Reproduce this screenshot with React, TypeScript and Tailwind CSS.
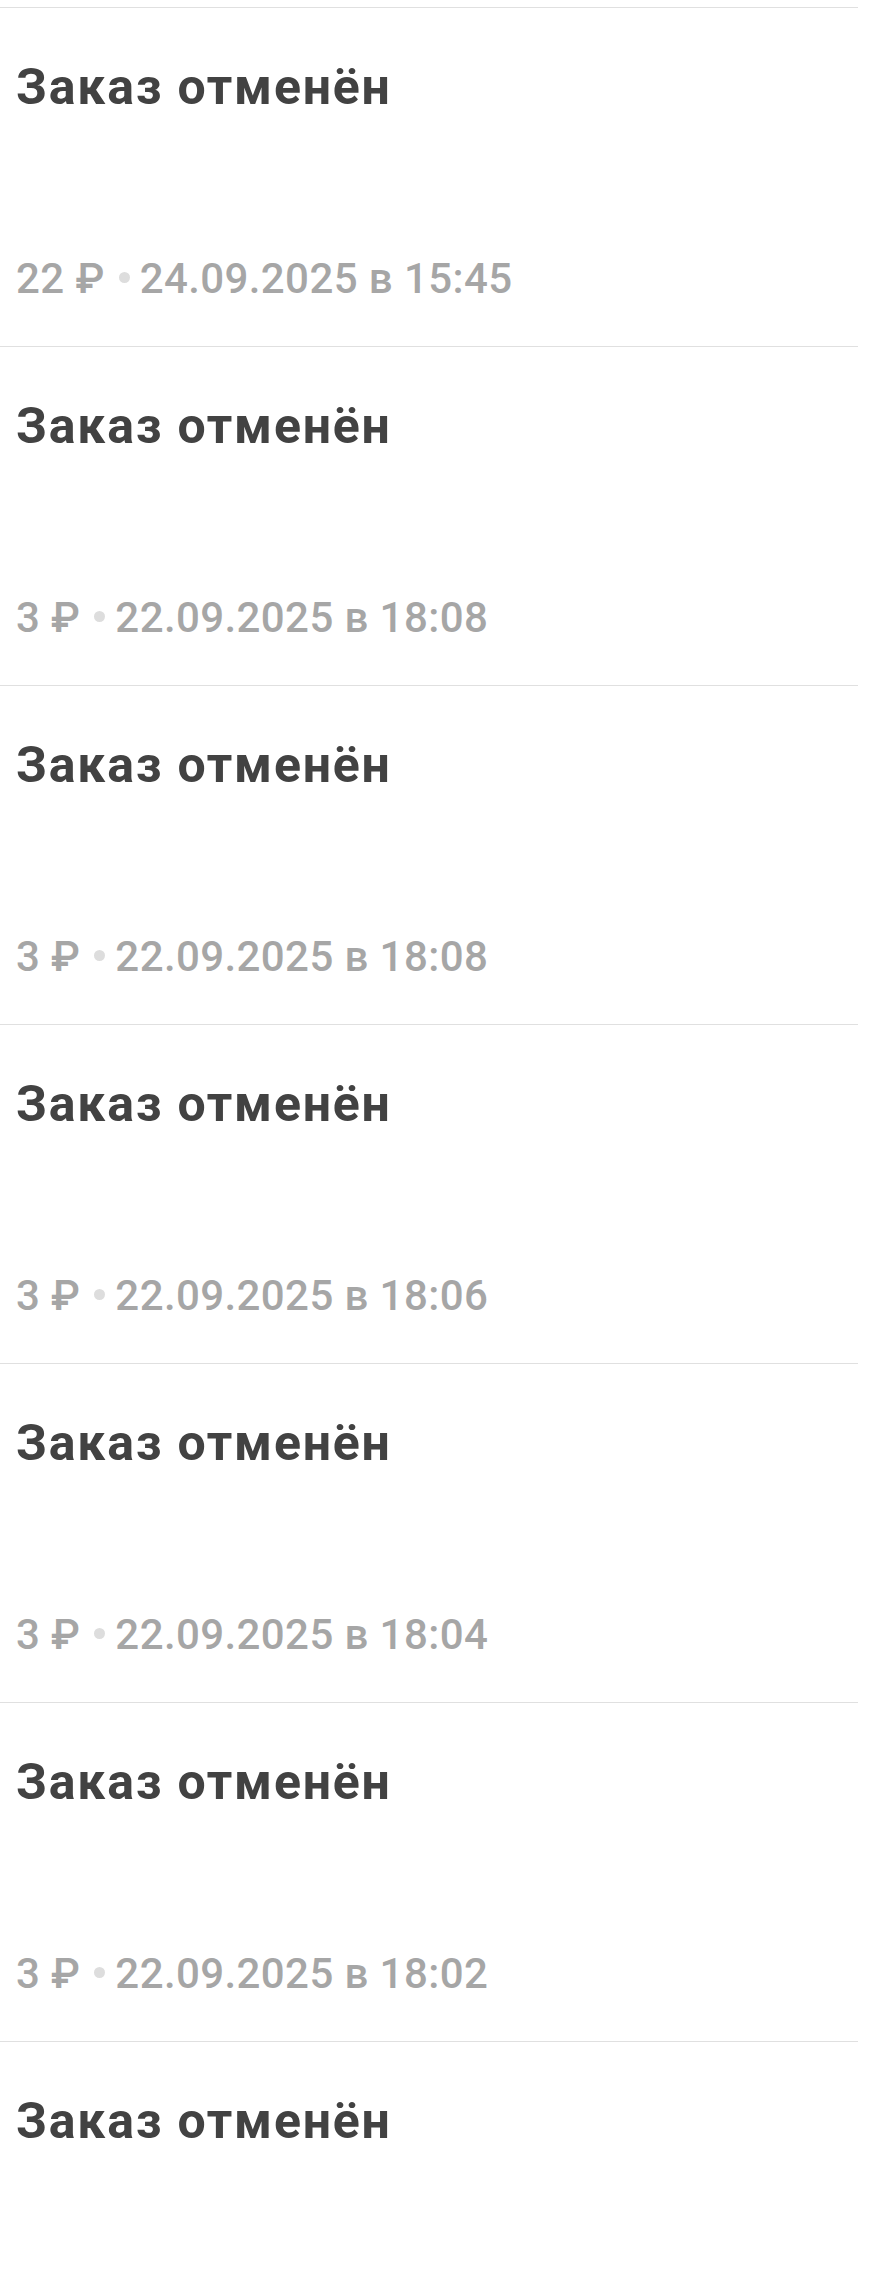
const orders = [
  { amount: '22', date: '24.09.2025', time: '15:45' },
  { amount: '3', date: '22.09.2025', time: '18:08' },
  { amount: '3', date: '22.09.2025', time: '18:08' },
  { amount: '3', date: '22.09.2025', time: '18:06' },
  { amount: '3', date: '22.09.2025', time: '18:04' },
  { amount: '3', date: '22.09.2025', time: '18:02' },
  { amount: '3', date: '22.09.2025', time: '18:00' },
];

function OrderRow({ amount, date, time }: { amount: string; date: string; time: string }) {
  return (
    <div className="border-t border-[#e0e0e0] pt-[54px] pb-[46px] pl-4">
      <h2 className="text-[50px] leading-none font-bold tracking-[1.8px] text-[#424242]">
        Заказ отменён
      </h2>
      <p className="mt-[146px] text-[42px] leading-none font-medium tracking-[0.4px] text-[#a6a6a6]">
        {amount} ₽
        <span className="ml-[14px] mr-[10px] inline-block h-[11px] w-[11px] rounded-full bg-[#dddddd] align-[10px]" />
        {date} в {time}
      </p>
    </div>
  );
}

export default function App() {
  return (
    <div className="min-h-screen bg-white font-['Roboto',sans-serif]">
      <div className="w-[858px]">
        <div className="h-[7px]" />
        {orders.map((order, i) => (
          <OrderRow key={i} {...order} />
        ))}
      </div>
    </div>
  );
}
